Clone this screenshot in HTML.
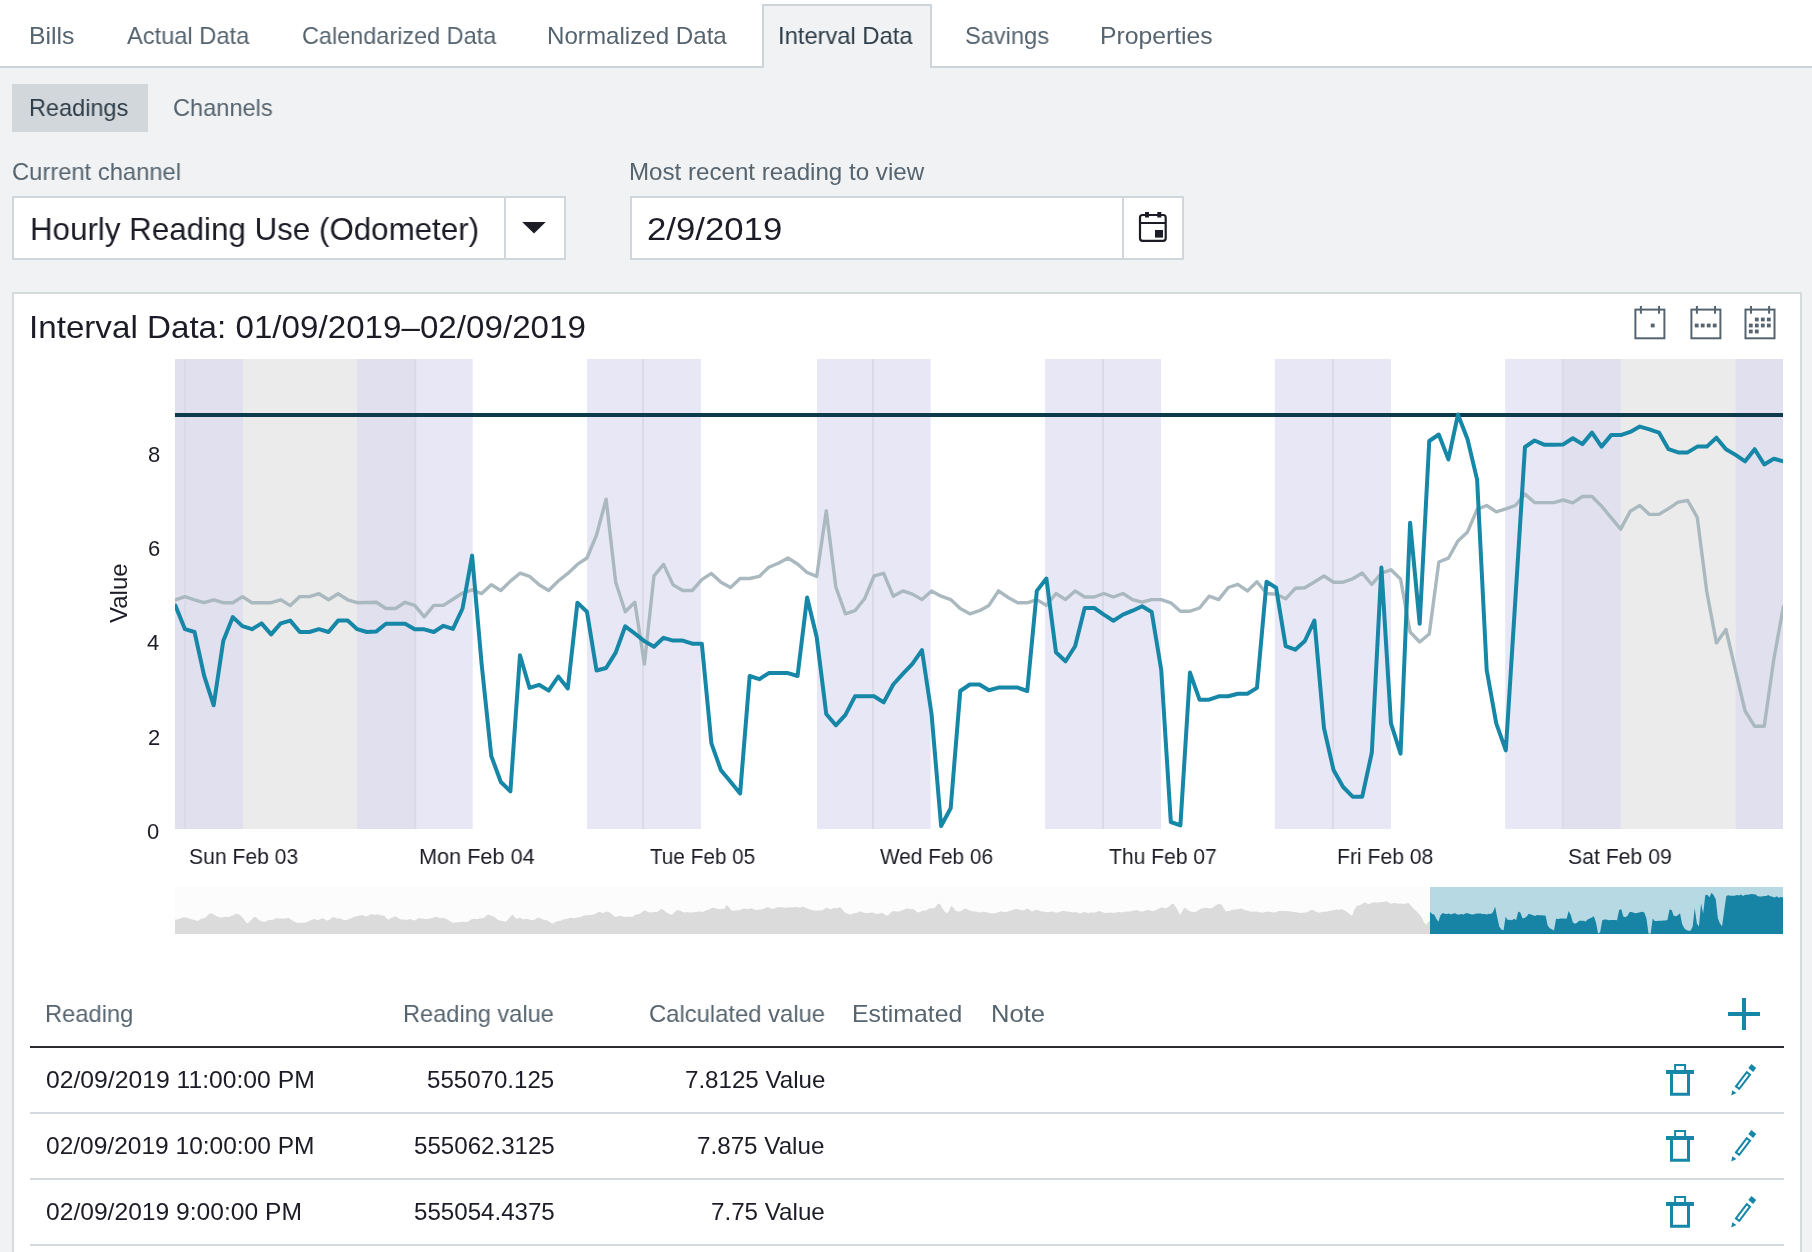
<!DOCTYPE html>
<html><head><meta charset="utf-8"><title>Interval Data</title>
<style>
html,body{margin:0;padding:0;}
body{width:1812px;height:1252px;overflow:hidden;position:relative;background:#f0f2f4;font-family:"Liberation Sans",sans-serif;}
.t{position:absolute;white-space:nowrap;line-height:1;transform-origin:0 0;will-change:transform;}
.abs{position:absolute;}
</style></head><body>
<div class="abs" style="left:0;top:0;width:1812px;height:66px;background:#ffffff;"></div>
<div class="abs" style="left:0;top:66px;width:1812px;height:2px;background:#cdd4d8;"></div>
<div class="abs" style="left:762px;top:4px;width:166px;height:62px;background:#f0f2f4;border:2px solid #cdd4d8;border-bottom:none;"></div>
<div class="abs" style="left:12px;top:84px;width:136px;height:48px;background:#d2d7db;"></div>
<div class="abs" style="left:12px;top:196px;width:550px;height:60px;background:#fff;border:2px solid #d0d7da;"></div>
<div class="abs" style="left:504px;top:198px;width:2px;height:60px;background:#d0d7da;"></div>
<div class="abs" style="left:630px;top:196px;width:550px;height:60px;background:#fff;border:2px solid #d0d7da;"></div>
<div class="abs" style="left:1122px;top:198px;width:2px;height:60px;background:#d0d7da;"></div>
<div class="abs" style="left:12px;top:292px;width:1786px;height:1000px;background:#fff;border:2px solid #d5dadd;"></div>
<svg class="abs" style="left:0;top:0" width="1812" height="1252" viewBox="0 0 1812 1252">
<polygon points="522.2,222 545.7,222 534,233.6" fill="#1b1c26"/>
<rect x="1140" y="215" width="25.7" height="25.8" rx="2.5" fill="none" stroke="#1b1c26" stroke-width="2.2"/>
<rect x="1140" y="222" width="25.7" height="2" fill="#1b1c26"/>
<rect x="1145" y="212" width="4" height="5.5" fill="#1b1c26"/>
<rect x="1157.3" y="212" width="4" height="5.5" fill="#1b1c26"/>
<rect x="1155" y="230" width="8" height="7.6" fill="#1b1c26"/>
<rect x="175.00" y="359" width="68.00" height="470" fill="#e1e0ee"/>
<rect x="243.00" y="359" width="114.00" height="470" fill="#ebebeb"/>
<rect x="357.00" y="359" width="58.30" height="470" fill="#e1e0ee"/>
<rect x="415.30" y="359" width="57.40" height="470" fill="#e8e7f5"/>
<rect x="587.10" y="359" width="113.80" height="470" fill="#e8e7f5"/>
<rect x="817.00" y="359" width="113.60" height="470" fill="#e8e7f5"/>
<rect x="1045.10" y="359" width="115.90" height="470" fill="#e8e7f5"/>
<rect x="1274.80" y="359" width="116.20" height="470" fill="#e8e7f5"/>
<rect x="1505.20" y="359" width="57.60" height="470" fill="#e8e7f5"/>
<rect x="1562.80" y="359" width="58.10" height="470" fill="#e1e0ee"/>
<rect x="1620.90" y="359" width="114.40" height="470" fill="#ebebeb"/>
<rect x="1735.30" y="359" width="47.70" height="470" fill="#e1e0ee"/>
<rect x="184.00" y="359" width="2" height="470" fill="#dbdae7"/>
<rect x="414.30" y="359" width="2" height="470" fill="#dbdae7"/>
<rect x="642.00" y="359" width="2" height="470" fill="#dbdae7"/>
<rect x="872.00" y="359" width="2" height="470" fill="#dbdae7"/>
<rect x="1102.00" y="359" width="2" height="470" fill="#dbdae7"/>
<rect x="1332.00" y="359" width="2" height="470" fill="#dbdae7"/>
<rect x="1561.80" y="359" width="2" height="470" fill="#dbdae7"/>
<rect x="175" y="413" width="1608" height="4" fill="#0e3b4c"/>
<defs><clipPath id="pc"><rect x="175" y="340" width="1608" height="500"/></clipPath></defs><g clip-path="url(#pc)">
<polyline points="175.40,599.8 184.97,596.6 194.54,599.8 204.11,602.7 213.69,599.8 223.26,602.7 232.83,602.7 242.40,596.6 251.97,602.7 261.54,602.7 271.11,602.7 280.69,599.8 290.26,605.6 299.83,596.6 309.40,596.6 318.97,593.7 328.54,599.8 338.11,593.7 347.69,599.8 357.26,602.7 366.83,602.5 376.40,602.3 385.97,608.5 395.54,608.5 405.11,602.3 414.69,605.4 424.26,616.8 433.83,605.4 443.40,605.4 452.97,599.2 462.54,593.0 472.11,589.8 481.68,593.6 491.26,584.7 500.83,590.5 510.40,581.1 519.97,573.2 529.54,576.3 539.11,584.7 548.68,590.5 558.26,581.0 567.83,573.4 577.40,564.4 586.97,558.0 596.54,535.0 606.11,499.2 615.68,582.3 625.26,611.7 634.83,602.3 644.40,664.1 653.97,575.9 663.54,564.4 673.11,584.9 682.68,590.5 692.26,590.5 701.83,579.7 711.40,573.4 720.97,582.3 730.54,587.4 740.11,578.5 749.68,578.5 759.26,576.4 768.83,567.2 778.40,563.2 787.97,558.0 797.54,564.0 807.11,572.5 816.68,576.4 826.26,511.0 835.83,587.0 845.40,613.8 854.97,610.7 864.54,598.8 874.11,575.9 883.68,573.3 893.25,596.2 902.83,590.9 912.40,594.1 921.97,599.6 931.54,590.9 941.11,596.2 950.68,599.6 960.25,608.6 969.83,613.8 979.40,610.7 988.97,605.4 998.54,590.9 1008.11,597.5 1017.68,602.8 1027.25,602.8 1036.83,599.6 1046.40,605.4 1055.97,593.5 1065.54,599.6 1075.11,590.9 1084.68,597.0 1094.25,597.0 1103.83,593.5 1113.40,597.0 1122.97,593.5 1132.54,599.6 1142.11,602.2 1151.68,599.6 1161.25,599.6 1170.83,602.8 1180.40,611.2 1189.97,611.2 1199.54,608.0 1209.11,596.2 1218.68,599.6 1228.25,587.5 1237.83,584.3 1247.40,590.9 1256.97,581.7 1266.54,593.5 1276.11,594.3 1285.68,598.8 1295.25,588.3 1304.83,587.7 1314.40,582.0 1323.97,576.0 1333.54,582.2 1343.11,582.2 1352.68,578.8 1362.25,573.0 1371.83,584.5 1381.40,573.2 1390.97,569.8 1400.54,579.0 1410.11,632.0 1419.68,642.0 1429.25,634.0 1438.82,562.0 1448.40,558.2 1457.97,540.9 1467.54,531.9 1477.11,509.3 1486.68,505.5 1496.25,511.8 1505.82,508.9 1515.40,505.5 1524.97,494.0 1534.54,502.6 1544.11,502.6 1553.68,502.6 1563.25,500.0 1572.82,502.9 1582.40,496.5 1591.97,496.5 1601.54,506.1 1611.11,517.6 1620.68,529.1 1630.25,511.2 1639.82,505.4 1649.40,514.4 1658.97,514.4 1668.54,508.6 1678.11,502.2 1687.68,500.5 1697.25,517.3 1706.82,592.0 1716.40,642.9 1725.97,629.5 1735.54,670.7 1745.11,711.0 1754.68,726.3 1764.25,726.3 1773.82,659.2 1783.40,606.4" fill="none" stroke="#aab9bf" stroke-width="3.4" stroke-linejoin="round" stroke-linecap="round"/>
<polyline points="175.40,605.6 184.97,629.2 194.54,632.0 204.11,675.6 213.69,705.3 223.26,641.0 232.83,617.1 242.40,626.1 251.97,629.2 261.54,623.4 271.11,634.4 280.69,623.4 290.26,620.6 299.83,632.0 309.40,632.0 318.97,629.2 328.54,632.0 338.11,620.6 347.69,620.6 357.26,629.2 366.83,632.0 376.40,631.4 385.97,623.7 395.54,623.7 405.11,623.7 414.69,629.3 424.26,629.3 433.83,632.0 443.40,625.8 452.97,628.9 462.54,608.5 472.11,555.6 481.68,664.6 491.26,756.0 500.83,782.0 510.40,791.3 519.97,655.3 529.54,687.9 539.11,684.8 548.68,690.6 558.26,676.5 567.83,688.4 577.40,602.8 586.97,611.7 596.54,670.5 606.11,668.0 615.68,652.6 625.26,626.3 634.83,633.5 644.40,641.1 653.97,646.8 663.54,637.8 673.11,640.6 682.68,640.6 692.26,643.7 701.83,643.7 711.40,743.4 720.97,770.3 730.54,781.8 740.11,793.5 749.68,676.0 759.26,679.2 768.83,673.1 778.40,673.1 787.97,673.1 797.54,676.0 807.11,597.5 816.68,637.0 826.26,714.0 835.83,725.3 845.40,714.8 854.97,696.3 864.54,696.3 874.11,696.3 883.68,702.4 893.25,684.5 902.83,673.9 912.40,663.9 921.97,650.2 931.54,714.0 941.11,826.0 950.68,808.3 960.25,691.0 969.83,684.5 979.40,684.5 988.97,690.2 998.54,687.6 1008.11,687.6 1017.68,687.6 1027.25,691.0 1036.83,590.9 1046.40,578.5 1055.97,652.3 1065.54,661.3 1075.11,646.2 1084.68,608.0 1094.25,608.0 1103.83,614.6 1113.40,620.7 1122.97,614.6 1132.54,610.7 1142.11,606.2 1151.68,612.0 1161.25,670.0 1170.83,822.0 1180.40,825.4 1189.97,672.6 1199.54,699.7 1209.11,699.7 1218.68,696.3 1228.25,696.3 1237.83,693.7 1247.40,693.7 1256.97,687.9 1266.54,581.7 1276.11,587.7 1285.68,646.2 1295.25,649.7 1304.83,641.0 1314.40,620.5 1323.97,728.0 1333.54,770.0 1343.11,787.0 1352.68,796.7 1362.25,796.7 1371.83,752.5 1381.40,567.5 1390.97,723.4 1400.54,753.6 1410.11,522.7 1419.68,623.8 1429.25,441.0 1438.82,434.5 1448.40,459.4 1457.97,414.5 1467.54,439.3 1477.11,479.6 1486.68,670.0 1496.25,723.4 1505.82,750.4 1515.40,599.0 1524.97,447.0 1534.54,440.5 1544.11,444.7 1553.68,444.7 1563.25,444.4 1572.82,438.3 1582.40,444.1 1591.97,432.6 1601.54,446.6 1611.11,435.1 1620.68,435.1 1630.25,431.9 1639.82,426.6 1649.40,429.4 1658.97,432.6 1668.54,449.2 1678.11,452.4 1687.68,452.4 1697.25,446.6 1706.82,446.6 1716.40,437.7 1725.97,449.2 1735.54,454.9 1745.11,461.3 1754.68,449.2 1764.25,464.5 1773.82,458.8 1783.40,461.3" fill="none" stroke="#1787a8" stroke-width="4" stroke-linejoin="round" stroke-linecap="round"/>
</g>
<rect x="175" y="887" width="1608" height="47" fill="#fcfcfd"/>
<polygon points="175,934 175.0,919.6 177.2,919.5 179.4,918.8 181.5,917.9 183.7,917.3 185.9,917.6 188.1,918.1 190.3,918.8 192.4,919.6 194.6,920.1 196.8,920.7 199.0,920.5 201.2,918.7 203.3,918.2 205.5,917.4 207.7,915.2 209.9,913.6 212.1,913.6 214.2,914.7 216.4,916.0 218.6,917.0 220.8,917.4 223.0,917.2 225.1,916.8 227.3,917.0 229.5,916.9 231.7,915.7 233.9,915.0 236.0,913.8 238.2,914.0 240.4,915.5 242.6,917.5 244.8,920.4 246.9,923.5 249.1,922.2 251.3,920.1 253.5,917.5 255.7,917.0 257.8,918.9 260.0,920.8 262.2,921.6 264.4,921.9 266.6,921.1 268.7,919.9 270.9,920.1 273.1,919.7 275.3,918.2 277.5,918.2 279.6,918.5 281.8,918.4 284.0,918.8 286.2,918.3 288.4,917.8 290.5,919.3 292.7,920.8 294.9,921.9 297.1,922.7 299.3,922.9 301.4,922.7 303.6,922.7 305.8,922.4 308.0,921.6 310.2,920.4 312.3,919.4 314.5,919.0 316.7,919.8 318.9,920.0 321.1,918.5 323.2,918.2 325.4,919.8 327.6,920.7 329.8,919.6 332.0,917.4 334.1,917.1 336.3,918.4 338.5,918.5 340.7,918.6 342.9,919.8 345.0,920.3 347.2,919.7 349.4,919.1 351.6,917.9 353.8,916.7 355.9,916.4 358.1,916.0 360.3,915.3 362.5,914.9 364.7,915.9 366.8,916.5 369.0,915.3 371.2,914.0 373.4,914.5 375.6,915.1 377.7,914.3 379.9,914.9 382.1,915.5 384.3,915.8 386.5,918.3 388.6,919.8 390.8,918.0 393.0,917.2 395.2,916.3 397.4,917.2 399.5,919.0 401.7,919.5 403.9,919.5 406.1,920.1 408.3,919.5 410.4,919.1 412.6,920.1 414.8,920.4 417.0,918.9 419.2,918.0 421.3,918.5 423.5,918.7 425.7,918.9 427.9,919.0 430.1,918.5 432.2,918.1 434.4,917.1 436.6,916.8 438.8,917.8 441.0,918.3 443.1,917.8 445.3,918.6 447.5,919.6 449.7,921.0 451.9,922.3 454.0,922.7 456.2,922.5 458.4,922.3 460.6,921.9 462.8,921.7 464.9,922.0 467.1,921.9 469.3,920.7 471.5,919.3 473.7,918.8 475.8,919.0 478.0,919.0 480.2,918.2 482.4,918.3 484.6,917.6 486.7,915.3 488.9,914.8 491.1,915.8 493.3,916.3 495.5,917.9 497.6,919.6 499.8,920.4 502.0,920.7 504.2,921.4 506.4,921.6 508.5,919.1 510.7,916.2 512.9,914.7 515.1,917.8 517.3,918.7 519.4,917.6 521.6,918.6 523.8,919.5 526.0,918.8 528.2,919.0 530.3,919.9 532.5,920.3 534.7,919.6 536.9,918.0 539.1,917.8 541.2,918.4 543.4,919.7 545.6,920.3 547.8,920.5 550.0,922.2 552.1,923.7 554.3,922.7 556.5,921.5 558.7,921.1 560.9,920.8 563.0,919.4 565.2,919.0 567.4,918.8 569.6,918.1 571.8,917.8 573.9,918.3 576.1,917.7 578.3,917.3 580.5,917.3 582.7,916.1 584.8,915.5 587.0,915.2 589.2,914.9 591.4,914.9 593.6,914.6 595.7,913.7 597.9,912.2 600.1,912.1 602.3,912.9 604.5,912.4 606.6,911.6 608.8,912.1 611.0,913.4 613.2,915.4 615.4,917.1 617.5,916.6 619.7,915.9 621.9,915.9 624.1,916.9 626.3,917.1 628.4,916.4 630.6,916.8 632.8,916.7 635.0,915.0 637.2,914.3 639.3,914.0 641.5,912.6 643.7,910.7 645.9,910.8 648.1,912.1 650.2,912.6 652.4,912.3 654.6,912.1 656.8,912.1 659.0,910.7 661.1,908.9 663.3,909.8 665.5,911.7 667.7,913.0 669.9,914.3 672.0,914.7 674.2,912.5 676.4,910.3 678.6,910.3 680.8,910.9 682.9,912.1 685.1,912.4 687.3,911.9 689.5,912.4 691.7,912.5 693.8,912.3 696.0,912.1 698.2,911.6 700.4,911.6 702.6,911.9 704.7,911.1 706.9,910.1 709.1,909.4 711.3,908.3 713.5,907.6 715.6,908.2 717.8,909.1 720.0,908.9 722.2,908.9 724.4,908.8 726.5,904.9 728.7,906.9 730.9,909.7 733.1,911.0 735.3,910.5 737.4,910.3 739.6,910.3 741.8,909.3 744.0,908.4 746.2,909.0 748.3,909.3 750.5,908.3 752.7,908.6 754.9,909.9 757.1,909.9 759.2,909.6 761.4,909.6 763.6,908.9 765.8,907.6 768.0,907.2 770.1,908.1 772.3,908.9 774.5,908.3 776.7,907.6 778.9,907.2 781.0,907.2 783.2,907.4 785.4,907.7 787.6,907.4 789.8,906.9 791.9,907.4 794.1,907.2 796.3,906.8 798.5,907.8 800.7,907.5 802.8,906.6 805.0,907.5 807.2,908.6 809.4,909.2 811.6,909.9 813.7,910.5 815.9,910.6 818.1,910.5 820.3,910.6 822.5,910.2 824.6,908.8 826.8,907.8 829.0,908.8 831.2,909.3 833.4,908.1 835.5,908.1 837.7,908.2 839.9,907.0 842.1,909.0 844.3,912.1 846.4,913.2 848.6,914.1 850.8,914.4 853.0,913.5 855.2,913.1 857.3,912.7 859.5,911.6 861.7,911.7 863.9,912.7 866.1,913.1 868.2,913.0 870.4,912.7 872.6,912.6 874.8,913.2 877.0,914.0 879.1,913.6 881.3,912.7 883.5,913.5 885.7,915.3 887.9,915.3 890.0,913.4 892.2,911.3 894.4,911.2 896.6,911.4 898.8,911.5 900.9,910.7 903.1,909.9 905.3,909.1 907.5,908.4 909.7,909.1 911.8,909.0 914.0,909.2 916.2,911.5 918.4,912.5 920.6,911.7 922.7,910.6 924.9,910.7 927.1,909.9 929.3,908.6 931.5,908.2 933.6,908.6 935.8,906.7 938.0,903.4 940.2,904.2 942.4,908.2 944.5,911.3 946.7,913.6 948.9,911.1 951.1,905.7 953.3,907.6 955.4,910.5 957.6,911.5 959.8,911.4 962.0,910.4 964.2,908.7 966.3,908.8 968.5,909.9 970.7,910.7 972.9,911.2 975.1,911.4 977.2,911.8 979.4,912.4 981.6,912.3 983.8,911.8 986.0,912.1 988.1,912.8 990.3,913.2 992.5,913.6 994.7,913.2 996.9,912.8 999.0,912.0 1001.2,911.3 1003.4,911.9 1005.6,912.3 1007.8,911.6 1009.9,910.8 1012.1,910.2 1014.3,909.3 1016.5,908.9 1018.7,909.6 1020.8,910.2 1023.0,910.5 1025.2,909.4 1027.4,908.4 1029.6,909.8 1031.7,911.5 1033.9,910.8 1036.1,909.7 1038.3,910.2 1040.5,911.3 1042.6,911.5 1044.8,911.8 1047.0,912.3 1049.2,911.9 1051.4,911.4 1053.5,911.9 1055.7,912.6 1057.9,912.6 1060.1,911.7 1062.3,910.7 1064.4,911.0 1066.6,911.5 1068.8,911.6 1071.0,912.1 1073.2,912.4 1075.3,912.1 1077.5,912.4 1079.7,913.4 1081.9,913.0 1084.1,911.8 1086.2,912.4 1088.4,913.2 1090.6,912.5 1092.8,912.4 1095.0,912.6 1097.1,911.7 1099.3,911.1 1101.5,911.7 1103.7,912.5 1105.9,913.0 1108.0,912.8 1110.2,912.5 1112.4,912.7 1114.6,912.7 1116.8,912.4 1118.9,912.1 1121.1,912.2 1123.3,912.2 1125.5,911.6 1127.7,911.5 1129.8,911.6 1132.0,910.9 1134.2,910.4 1136.4,909.9 1138.6,910.5 1140.7,911.5 1142.9,911.5 1145.1,910.8 1147.3,909.9 1149.5,909.9 1151.6,911.0 1153.8,911.1 1156.0,910.1 1158.2,908.9 1160.4,907.8 1162.5,907.4 1164.7,908.3 1166.9,907.9 1169.1,906.4 1171.3,904.2 1173.4,903.8 1175.6,906.6 1177.8,910.2 1180.0,914.9 1182.2,911.4 1184.3,907.6 1186.5,909.1 1188.7,910.5 1190.9,911.6 1193.1,911.9 1195.2,912.0 1197.4,911.0 1199.6,909.2 1201.8,908.4 1204.0,908.0 1206.1,907.8 1208.3,908.2 1210.5,908.4 1212.7,907.8 1214.9,905.9 1217.0,904.5 1219.2,904.0 1221.4,904.5 1223.6,907.9 1225.8,911.2 1227.9,911.2 1230.1,910.7 1232.3,909.8 1234.5,909.4 1236.7,909.4 1238.8,909.0 1241.0,908.4 1243.2,909.3 1245.4,910.4 1247.6,910.6 1249.7,911.5 1251.9,911.8 1254.1,911.4 1256.3,911.6 1258.5,912.1 1260.6,912.6 1262.8,912.7 1265.0,912.1 1267.2,911.6 1269.4,911.7 1271.5,912.3 1273.7,912.6 1275.9,912.3 1278.1,911.2 1280.3,910.8 1282.4,911.1 1284.6,911.0 1286.8,911.0 1289.0,911.3 1291.2,911.6 1293.3,912.0 1295.5,912.1 1297.7,912.5 1299.9,913.1 1302.1,912.7 1304.2,912.4 1306.4,912.4 1308.6,911.5 1310.8,909.9 1313.0,910.0 1315.1,911.2 1317.3,912.2 1319.5,912.7 1321.7,912.1 1323.9,911.8 1326.0,911.7 1328.2,911.3 1330.4,910.8 1332.6,910.3 1334.8,909.9 1336.9,909.6 1339.1,909.8 1341.3,909.3 1343.5,909.9 1345.7,911.0 1347.8,912.5 1350.0,914.6 1352.2,915.4 1354.4,909.6 1356.6,906.1 1358.7,905.4 1360.9,904.8 1363.1,903.2 1365.3,902.6 1367.5,903.7 1369.6,903.9 1371.8,902.8 1374.0,902.2 1376.2,902.4 1378.4,902.6 1380.5,902.2 1382.7,902.0 1384.9,901.6 1387.1,901.5 1389.3,902.9 1391.4,903.7 1393.6,903.1 1395.8,903.1 1398.0,903.8 1400.2,903.5 1402.3,903.5 1404.5,904.0 1406.7,903.3 1408.9,902.9 1411.1,906.0 1413.2,908.3 1415.4,910.2 1417.6,912.4 1419.8,914.7 1422.0,918.0 1424.1,922.6 1426.3,925.1 1428.5,921.4 1430.0,921.0 1430,934" fill="#dbdbdb"/>
<rect x="1430" y="887" width="353" height="47" fill="#b7d9e3"/>
<polygon points="1430,934 1430.00,911.8 1432.10,914.1 1434.20,914.4 1436.30,918.7 1438.40,921.7 1440.51,915.3 1442.61,912.9 1444.71,913.8 1446.81,914.1 1448.91,913.5 1451.01,914.6 1453.11,913.5 1455.21,913.3 1457.32,914.4 1459.42,914.4 1461.52,914.1 1463.62,914.4 1465.72,913.3 1467.82,913.3 1469.92,914.1 1472.02,914.4 1474.12,914.3 1476.23,913.6 1478.33,913.6 1480.43,913.6 1482.53,914.1 1484.63,914.1 1486.73,914.4 1488.83,913.8 1490.93,914.1 1493.04,912.0 1495.14,906.8 1497.24,917.6 1499.34,926.8 1501.44,929.4 1503.54,930.3 1505.64,916.7 1507.74,920.0 1509.85,919.7 1511.95,920.2 1514.05,918.8 1516.15,920.0 1518.25,911.5 1520.35,912.4 1522.45,918.2 1524.55,918.0 1526.65,916.4 1528.76,913.8 1530.86,914.5 1532.96,915.3 1535.06,915.9 1537.16,915.0 1539.26,915.2 1541.36,915.2 1543.46,915.6 1545.57,915.6 1547.67,925.5 1549.77,928.2 1551.87,929.3 1553.97,930.5 1556.07,918.8 1558.17,919.1 1560.27,918.5 1562.38,918.5 1564.48,918.5 1566.58,918.8 1568.68,910.9 1570.78,914.9 1572.88,922.6 1574.98,923.7 1577.08,922.7 1579.18,920.8 1581.29,920.8 1583.39,920.8 1585.49,921.4 1587.59,919.6 1589.69,918.6 1591.79,917.6 1593.89,916.2 1595.99,922.6 1598.10,933.8 1600.20,932.0 1602.30,920.3 1604.40,919.6 1606.50,919.6 1608.60,920.2 1610.70,919.9 1612.80,919.9 1614.90,919.9 1617.01,920.3 1619.11,910.3 1621.21,909.1 1623.31,916.4 1625.41,917.3 1627.51,915.8 1629.61,912.0 1631.71,912.0 1633.82,912.7 1635.92,913.3 1638.02,912.7 1640.12,912.3 1642.22,911.8 1644.32,912.4 1646.42,918.2 1648.52,933.4 1650.62,933.7 1652.73,918.4 1654.83,921.1 1656.93,921.1 1659.03,920.8 1661.13,920.8 1663.23,920.5 1665.33,920.5 1667.43,920.0 1669.54,909.4 1671.64,910.0 1673.74,915.8 1675.84,916.2 1677.94,915.3 1680.04,913.2 1682.14,924.0 1684.24,928.2 1686.35,929.9 1688.45,930.8 1690.55,930.8 1692.65,926.4 1694.75,908.0 1696.85,923.5 1698.95,926.5 1701.05,903.5 1703.15,913.6 1705.26,895.3 1707.36,894.7 1709.46,897.2 1711.56,892.7 1713.66,895.2 1715.76,899.2 1717.86,918.2 1719.96,923.5 1722.07,926.2 1724.17,911.1 1726.27,895.9 1728.37,895.3 1730.47,895.7 1732.57,895.7 1734.67,895.7 1736.77,895.1 1738.88,895.6 1740.98,894.5 1743.08,895.9 1745.18,894.7 1747.28,894.7 1749.38,894.4 1751.48,893.9 1753.58,894.2 1755.68,894.5 1757.79,896.2 1759.89,896.5 1761.99,896.5 1764.09,895.9 1766.19,895.9 1768.29,895.0 1770.39,896.2 1772.49,896.7 1774.60,897.4 1776.70,896.2 1778.80,897.7 1780.90,897.1 1783.00,897.4 1783,934" fill="#1784a6"/>
<rect x="1635.4" y="309.6" width="29" height="28.7" fill="none" stroke="#56646f" stroke-width="2"/><rect x="1639.9" y="306" width="2" height="7.7" fill="#56646f"/><rect x="1658.0" y="306" width="2" height="7.7" fill="#56646f"/><rect x="1650.8" y="323.6" width="3.8" height="3.8" fill="#56646f"/><rect x="1691.4" y="309.6" width="29" height="28.7" fill="none" stroke="#56646f" stroke-width="2"/><rect x="1695.9" y="306" width="2" height="7.7" fill="#56646f"/><rect x="1714.0" y="306" width="2" height="7.7" fill="#56646f"/><rect x="1694.8" y="323.6" width="3.8" height="3.8" fill="#56646f"/><rect x="1700.8" y="323.6" width="3.8" height="3.8" fill="#56646f"/><rect x="1706.8" y="323.6" width="3.8" height="3.8" fill="#56646f"/><rect x="1712.8" y="323.6" width="3.8" height="3.8" fill="#56646f"/><rect x="1745.5" y="309.6" width="29" height="28.7" fill="none" stroke="#56646f" stroke-width="2"/><rect x="1750.0" y="306" width="2" height="7.7" fill="#56646f"/><rect x="1768.1" y="306" width="2" height="7.7" fill="#56646f"/><rect x="1754.9" y="317.6" width="3.8" height="3.8" fill="#56646f"/><rect x="1760.9" y="317.6" width="3.8" height="3.8" fill="#56646f"/><rect x="1766.9" y="317.6" width="3.8" height="3.8" fill="#56646f"/><rect x="1748.9" y="323.6" width="3.8" height="3.8" fill="#56646f"/><rect x="1754.9" y="323.6" width="3.8" height="3.8" fill="#56646f"/><rect x="1760.9" y="323.6" width="3.8" height="3.8" fill="#56646f"/><rect x="1766.9" y="323.6" width="3.8" height="3.8" fill="#56646f"/><rect x="1748.9" y="329.6" width="3.8" height="3.8" fill="#56646f"/><rect x="1754.9" y="329.6" width="3.8" height="3.8" fill="#56646f"/>
<rect x="30" y="1046" width="1754" height="2" fill="#2b2d31"/>
<rect x="30" y="1112" width="1754" height="2" fill="#d3d9dc"/>
<rect x="30" y="1178" width="1754" height="2" fill="#d3d9dc"/>
<rect x="30" y="1244" width="1754" height="2" fill="#d3d9dc"/>
<rect x="1742" y="998" width="4" height="32" fill="#1787a8"/>
<rect x="1728" y="1012" width="32" height="4" fill="#1787a8"/>
<g transform="translate(0,0)"><rect x="1675.1" y="1065" width="10" height="7" fill="none" stroke="#1787a8" stroke-width="2"/><rect x="1666" y="1070" width="28" height="4" fill="#1787a8"/><path d="M1671.5,1074 V1094.3 H1688.5 V1074" fill="none" stroke="#1787a8" stroke-width="3"/></g><g transform="translate(0,0)"><polygon points="1731.3,1095.4 1732.3,1090.2 1736.4,1093.1" fill="#1787a8"/><polygon points="1735.98,1086.36 1739.24,1088.84 1750.02,1074.64 1746.76,1072.16" fill="none" stroke="#1787a8" stroke-width="2"/><polygon points="1751.4,1064.1 1756.2,1068 1753.2,1072 1748.3,1068" fill="#1787a8"/></g><g transform="translate(0,66)"><rect x="1675.1" y="1065" width="10" height="7" fill="none" stroke="#1787a8" stroke-width="2"/><rect x="1666" y="1070" width="28" height="4" fill="#1787a8"/><path d="M1671.5,1074 V1094.3 H1688.5 V1074" fill="none" stroke="#1787a8" stroke-width="3"/></g><g transform="translate(0,66)"><polygon points="1731.3,1095.4 1732.3,1090.2 1736.4,1093.1" fill="#1787a8"/><polygon points="1735.98,1086.36 1739.24,1088.84 1750.02,1074.64 1746.76,1072.16" fill="none" stroke="#1787a8" stroke-width="2"/><polygon points="1751.4,1064.1 1756.2,1068 1753.2,1072 1748.3,1068" fill="#1787a8"/></g><g transform="translate(0,132)"><rect x="1675.1" y="1065" width="10" height="7" fill="none" stroke="#1787a8" stroke-width="2"/><rect x="1666" y="1070" width="28" height="4" fill="#1787a8"/><path d="M1671.5,1074 V1094.3 H1688.5 V1074" fill="none" stroke="#1787a8" stroke-width="3"/></g><g transform="translate(0,132)"><polygon points="1731.3,1095.4 1732.3,1090.2 1736.4,1093.1" fill="#1787a8"/><polygon points="1735.98,1086.36 1739.24,1088.84 1750.02,1074.64 1746.76,1072.16" fill="none" stroke="#1787a8" stroke-width="2"/><polygon points="1751.4,1064.1 1756.2,1068 1753.2,1072 1748.3,1068" fill="#1787a8"/></g>
</svg>
<span class="t" style="left:29.25px;top:24.28px;font-size:24px;color:#56646f;transform:scaleX(1.0331);">Bills</span>
<span class="t" style="left:127.05px;top:24.28px;font-size:24px;color:#56646f;transform:scaleX(0.9857);">Actual Data</span>
<span class="t" style="left:301.95px;top:24.28px;font-size:24px;color:#56646f;transform:scaleX(0.9769);">Calendarized Data</span>
<span class="t" style="left:547.45px;top:24.28px;font-size:24px;color:#56646f;transform:scaleX(1.0058);">Normalized Data</span>
<span class="t" style="left:778.25px;top:24.28px;font-size:24px;color:#2e3d48;transform:scaleX(0.9889);">Interval Data</span>
<span class="t" style="left:965.35px;top:24.28px;font-size:24px;color:#56646f;transform:scaleX(0.9838);">Savings</span>
<span class="t" style="left:1100.05px;top:24.28px;font-size:24px;color:#56646f;transform:scaleX(1.0300);">Properties</span>
<span class="t" style="left:29.25px;top:95.58px;font-size:24px;color:#2e3d48;transform:scaleX(0.9788);">Readings</span>
<span class="t" style="left:172.90px;top:95.58px;font-size:24px;color:#56646f;transform:scaleX(0.9825);">Channels</span>
<span class="t" style="left:11.55px;top:159.78px;font-size:24px;color:#56646f;transform:scaleX(0.9897);">Current channel</span>
<span class="t" style="left:629.20px;top:159.78px;font-size:24px;color:#56646f;transform:scaleX(1.0055);">Most recent reading to view</span>
<span class="t" style="left:30.00px;top:213.11px;font-size:32px;color:#1b1c26;transform:scaleX(0.9787);">Hourly Reading Use (Odometer)</span>
<span class="t" style="left:646.85px;top:213.01px;font-size:32px;color:#1b1c26;transform:scaleX(1.0857);">2/9/2019</span>
<span class="t" style="left:28.95px;top:310.71px;font-size:32px;color:#1b1c26;transform:scaleX(1.0365);">Interval Data: 01/09/2019–02/09/2019</span>
<span class="t" style="left:147.20px;top:820.68px;font-size:22px;color:#1b1c26;transform:scaleX(1.0000);">0</span>
<span class="t" style="left:148.10px;top:726.68px;font-size:22px;color:#1b1c26;transform:scaleX(1.0000);">2</span>
<span class="t" style="left:147.20px;top:632.28px;font-size:22px;color:#1b1c26;transform:scaleX(1.0000);">4</span>
<span class="t" style="left:148.10px;top:538.38px;font-size:22px;color:#1b1c26;transform:scaleX(1.0000);">6</span>
<span class="t" style="left:148.10px;top:444.28px;font-size:22px;color:#1b1c26;transform:scaleX(1.0000);">8</span>
<span class="t" style="left:189.15px;top:846.18px;font-size:22px;color:#1b1c26;transform:scaleX(0.9599);">Sun Feb 03</span>
<span class="t" style="left:419.40px;top:846.18px;font-size:22px;color:#1b1c26;transform:scaleX(0.9850);">Mon Feb 04</span>
<span class="t" style="left:649.75px;top:846.18px;font-size:22px;color:#1b1c26;transform:scaleX(0.9411);">Tue Feb 05</span>
<span class="t" style="left:879.55px;top:846.18px;font-size:22px;color:#1b1c26;transform:scaleX(0.9463);">Wed Feb 06</span>
<span class="t" style="left:1109.05px;top:846.18px;font-size:22px;color:#1b1c26;transform:scaleX(0.9578);">Thu Feb 07</span>
<span class="t" style="left:1337.05px;top:846.18px;font-size:22px;color:#1b1c26;transform:scaleX(0.9607);">Fri Feb 08</span>
<span class="t" style="left:1568.30px;top:846.18px;font-size:22px;color:#1b1c26;transform:scaleX(0.9636);">Sat Feb 09</span>
<span class="t" style="left:44.65px;top:1002.18px;font-size:24px;color:#56646f;transform:scaleX(0.9877);">Reading</span>
<span class="t" style="left:403.25px;top:1002.18px;font-size:24px;color:#56646f;transform:scaleX(0.9833);">Reading value</span>
<span class="t" style="left:648.50px;top:1002.18px;font-size:24px;color:#56646f;transform:scaleX(0.9921);">Calculated value</span>
<span class="t" style="left:852.45px;top:1002.18px;font-size:24px;color:#56646f;transform:scaleX(1.0330);">Estimated</span>
<span class="t" style="left:990.60px;top:1002.18px;font-size:24px;color:#56646f;transform:scaleX(1.0642);">Note</span>
<span class="t" style="left:45.55px;top:1067.58px;font-size:24px;color:#1b1c26;transform:scaleX(1.0292);">02/09/2019 11:00:00 PM</span>
<span class="t" style="left:426.73px;top:1067.58px;font-size:24px;color:#1b1c26;transform:scaleX(1.0034);">555070.125</span>
<span class="t" style="left:684.67px;top:1067.58px;font-size:24px;color:#1b1c26;transform:scaleX(1.0046);">7.8125 Value</span>
<span class="t" style="left:45.55px;top:1133.68px;font-size:24px;color:#1b1c26;transform:scaleX(1.0214);">02/09/2019 10:00:00 PM</span>
<span class="t" style="left:413.52px;top:1133.68px;font-size:24px;color:#1b1c26;transform:scaleX(1.0045);">555062.3125</span>
<span class="t" style="left:697.35px;top:1133.68px;font-size:24px;color:#1b1c26;transform:scaleX(1.0083);">7.875 Value</span>
<span class="t" style="left:45.55px;top:1199.88px;font-size:24px;color:#1b1c26;transform:scaleX(1.0258);">02/09/2019 9:00:00 PM</span>
<span class="t" style="left:413.52px;top:1199.88px;font-size:24px;color:#1b1c26;transform:scaleX(1.0045);">555054.4375</span>
<span class="t" style="left:711.46px;top:1199.88px;font-size:24px;color:#1b1c26;transform:scaleX(1.0074);">7.75 Value</span>
<span class="t" style="left:106.5px;top:623px;font-size:24px;color:#1b1c26;transform:rotate(-90deg);transform-origin:0 0;">Value</span>
</body></html>
